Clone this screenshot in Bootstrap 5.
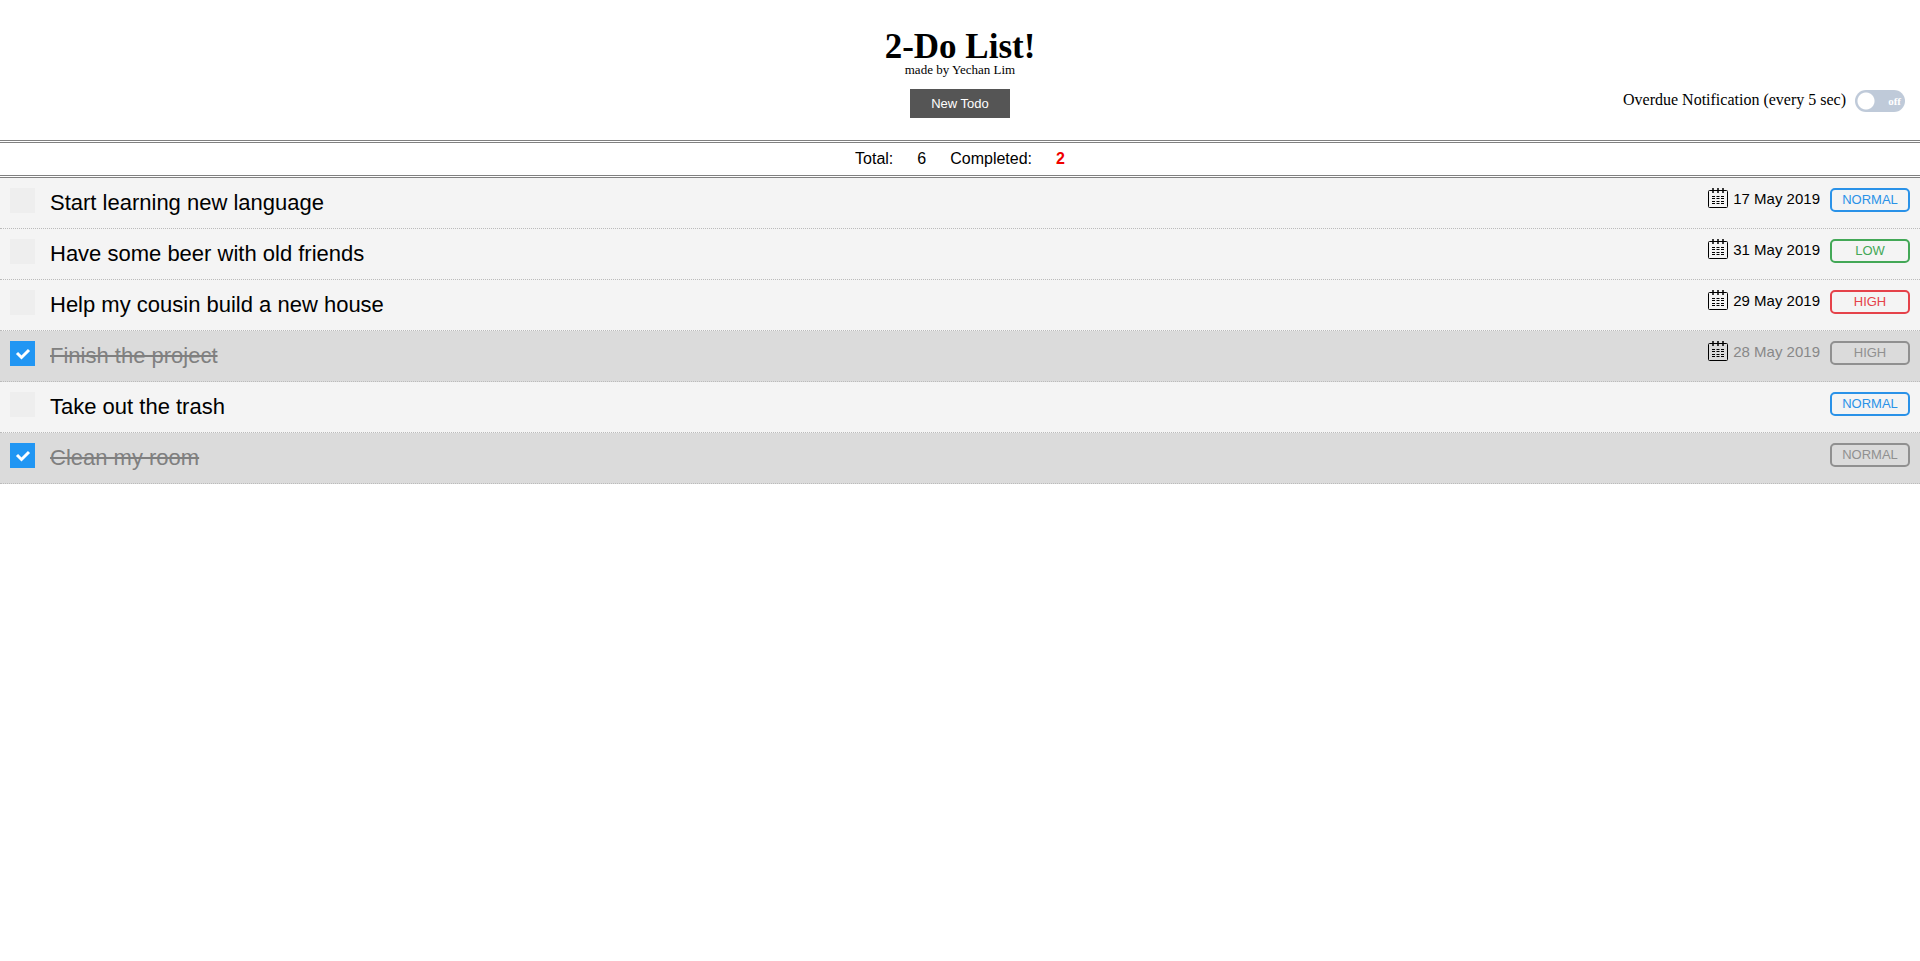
<!DOCTYPE html>
<html lang="en">
<head>
<meta charset="utf-8">
<meta name="viewport" content="width=device-width, initial-scale=1">
<title>2-Do List!</title>
<link href="https://cdn.jsdelivr.net/npm/bootstrap@5.3.0/dist/css/bootstrap.min.css" rel="stylesheet">
<style>
  body { font-family: "Liberation Sans", Arial, sans-serif; color: #000; background: #fff; }
  .app-header { font-family: "Liberation Serif", "Times New Roman", serif; padding: 31px 0 22px; }
  .app-title { font-size: 35px; line-height: 32px; font-weight: 700; }
  .app-author { font-size: 13px; line-height: 14px; margin-bottom: 12px; }
  .btn-new { font-family: "Liberation Sans", Arial, sans-serif; font-size: 13px; line-height: 15px; width: 100px; padding: 7px 0; background: #555; color: #fff; }
  .btn-new:hover { background: #333; color: #fff; }
  .notify { gap: 9px; padding: 0 15px 6px 0; font-size: 16px; line-height: 20px; }
  .notify .form-check-input { width: 50px; height: 22px; margin: 0; border: 0; border-radius: 11px; background: radial-gradient(circle at 11px 11px, #fff 8px, transparent 9px) #bfcad9; }
  .notify .form-check-input:checked { background: radial-gradient(circle at 39px 11px, #fff 8px, transparent 9px) #2196f3; }
  .switch-state { right: 4px; top: 0; font-size: 11px; line-height: 22px; pointer-events: none; }
  .form-check-input:checked + .switch-state { display: none; }
  .stats { gap: 24px; font-size: 16px; line-height: 32px; border: solid #808080; border-style: double none; border-width: 3px 0; }
  .stats strong { color: #f00000; }
  .todo { background: #f4f4f4; border-bottom: 1px dotted #bbb; padding: 10px; }
  .todo .todo-check { width: 25px; height: 25px; margin: 0; border: 0; border-radius: 0; background-color: #eee; }
  .todo .todo-check:checked { background-color: #2196f3; background-size: 25px 25px; background-image: url("data:image/svg+xml,%3Csvg xmlns='http://www.w3.org/2000/svg' viewBox='0 0 25 25'%3E%3Cpath fill='none' stroke='%23fff' stroke-width='3' d='M7 12l4.500 4.500 7.500-7.500'/%3E%3C/svg%3E"); }
  .todo-text { font-size: 22px; line-height: 30px; margin-left: 15px; }
  .todo-date { gap: 5px; font-size: 15px; line-height: 22px; }
  .prio { width: 80px; border: 2px solid; border-radius: 5px; font-size: 13px; line-height: 20px; margin-left: 10px; }
  .prio-normal { color: #2a92e8; }
  .prio-low { color: #43a857; }
  .prio-high { color: #e5424a; }
  .todo.done { background: #dbdbdb; }
  .done .todo-text { color: #808080; text-decoration: line-through; }
  .done .todo-date time { color: #888; }
  .done .prio { color: #909090; }
</style>
</head>
<body>
<svg class="d-none" aria-hidden="true">
  <symbol id="calendar" viewBox="0 0 20 20">
    <rect x=".5" y="2.5" width="19" height="17" rx="1" fill="none" stroke="#000"/>
    <path d="M5 0v5M10 0v5M15 0v5" stroke="#000" stroke-width="1.5"/>
    <path d="M4 8.500h12M4 10.500h12M4 13.500h12M4 15.500h12" stroke="#000" stroke-dasharray="3 1.500"/>
  </symbol>
</svg>

<header class="app-header">
  <div class="row g-0">
    <div class="col"></div>
    <div class="col-auto text-center">
      <h1 class="app-title mb-0">2-Do List!</h1>
      <p class="app-author">made by Yechan Lim</p>
      <button type="button" class="btn btn-new rounded-0 border-0 d-block mx-auto">New Todo</button>
    </div>
    <div class="col d-flex align-items-end justify-content-end">
      <div class="notify d-flex">
        <label for="overdue">Overdue Notification (every 5 sec)</label>
        <div class="position-relative d-flex">
          <input class="form-check-input" type="checkbox" role="switch" id="overdue">
          <span class="switch-state position-absolute text-white fw-bold">off</span>
        </div>
      </div>
    </div>
  </div>
</header>

<section class="stats d-flex justify-content-center">
  <span>Total:</span><span>6</span><span>Completed:</span><strong>2</strong>
</section>

<main>
  <ul class="list-unstyled mb-0">
    <li class="todo d-flex align-items-start">
      <input class="form-check-input todo-check" type="checkbox" id="t1">
      <label class="todo-text me-auto" for="t1">Start learning new language</label>
      <div class="todo-date d-flex"><svg width="20" height="20"><use href="#calendar"/></svg><time datetime="2019-05-17">17 May 2019</time></div>
      <span class="prio prio-normal text-center">NORMAL</span>
    </li>
    <li class="todo d-flex align-items-start">
      <input class="form-check-input todo-check" type="checkbox" id="t2">
      <label class="todo-text me-auto" for="t2">Have some beer with old friends</label>
      <div class="todo-date d-flex"><svg width="20" height="20"><use href="#calendar"/></svg><time datetime="2019-05-31">31 May 2019</time></div>
      <span class="prio prio-low text-center">LOW</span>
    </li>
    <li class="todo d-flex align-items-start">
      <input class="form-check-input todo-check" type="checkbox" id="t3">
      <label class="todo-text me-auto" for="t3">Help my cousin build a new house</label>
      <div class="todo-date d-flex"><svg width="20" height="20"><use href="#calendar"/></svg><time datetime="2019-05-29">29 May 2019</time></div>
      <span class="prio prio-high text-center">HIGH</span>
    </li>
    <li class="todo done d-flex align-items-start">
      <input class="form-check-input todo-check" type="checkbox" id="t4" checked>
      <label class="todo-text me-auto" for="t4">Finish the project</label>
      <div class="todo-date d-flex"><svg width="20" height="20"><use href="#calendar"/></svg><time datetime="2019-05-28">28 May 2019</time></div>
      <span class="prio prio-high text-center">HIGH</span>
    </li>
    <li class="todo d-flex align-items-start">
      <input class="form-check-input todo-check" type="checkbox" id="t5">
      <label class="todo-text me-auto" for="t5">Take out the trash</label>
      <span class="prio prio-normal text-center">NORMAL</span>
    </li>
    <li class="todo done d-flex align-items-start">
      <input class="form-check-input todo-check" type="checkbox" id="t6" checked>
      <label class="todo-text me-auto" for="t6">Clean my room</label>
      <span class="prio prio-normal text-center">NORMAL</span>
    </li>
  </ul>
</main>
<script src="https://cdn.jsdelivr.net/npm/bootstrap@5.3.0/dist/js/bootstrap.bundle.min.js"></script>
</body>
</html>
